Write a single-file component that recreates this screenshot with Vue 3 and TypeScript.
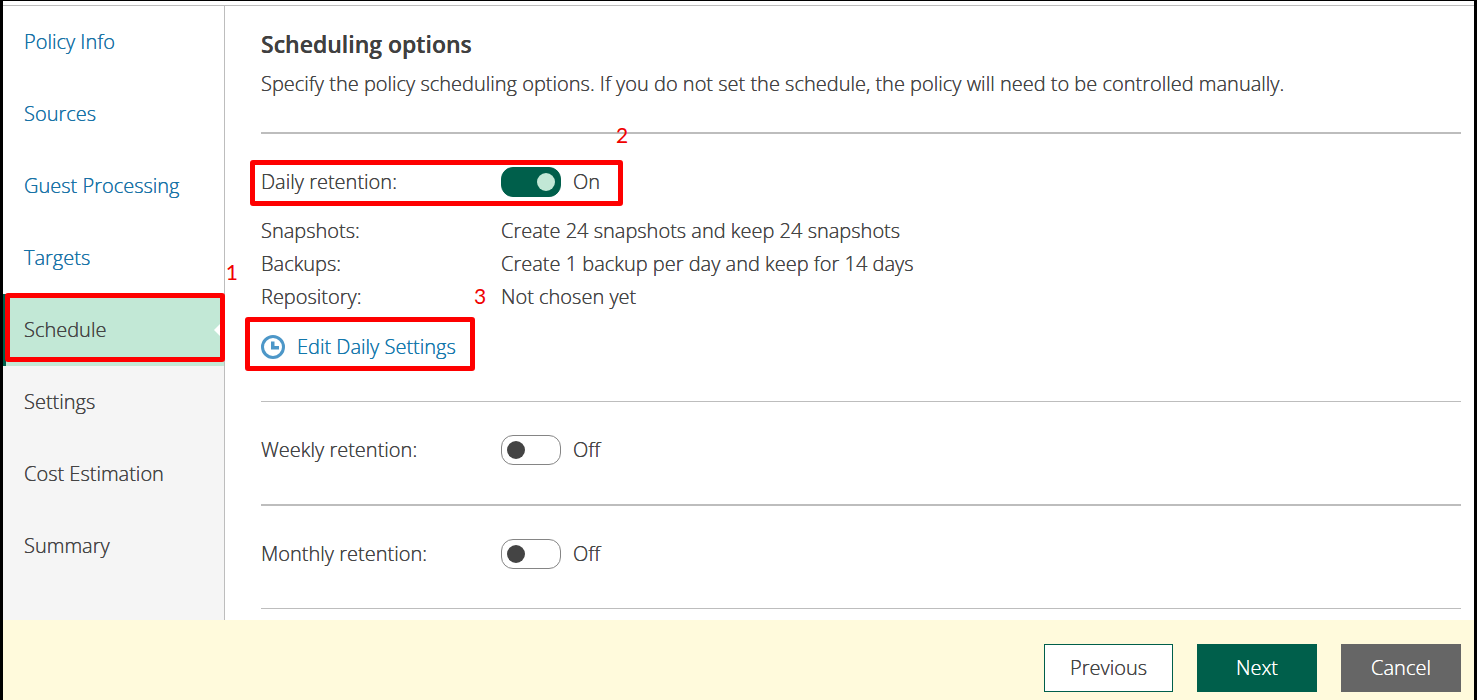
<script setup lang="ts">
import { ref } from 'vue'

interface Step {
  label: string
  state: 'done' | 'current' | 'pending'
}

interface Retention {
  id: string
  label: string
  rule: 'thin' | 'thick'
  on: boolean
  details: { term: string; text: string; note?: string }[]
}

const steps: Step[] = [
  { label: 'Policy Info', state: 'done' },
  { label: 'Sources', state: 'done' },
  { label: 'Guest Processing', state: 'done' },
  { label: 'Targets', state: 'done' },
  { label: 'Schedule', state: 'current' },
  { label: 'Settings', state: 'pending' },
  { label: 'Cost Estimation', state: 'pending' },
  { label: 'Summary', state: 'pending' },
]

const retentions = ref<Retention[]>([
  {
    id: 'daily',
    label: 'Daily retention:',
    rule: 'thick',
    on: true,
    details: [
      { term: 'Snapshots:', text: 'Create 24 snapshots and keep 24 snapshots' },
      { term: 'Backups:', text: 'Create 1 backup per day and keep for 14 days' },
      { term: 'Repository:', text: 'Not chosen yet', note: '3' },
    ],
  },
  { id: 'weekly', label: 'Weekly retention:', rule: 'thin', on: false, details: [] },
  { id: 'monthly', label: 'Monthly retention:', rule: 'thick', on: false, details: [] },
])
</script>

<template>
  <div class="frame">
    <div class="body">
      <nav class="steps" aria-label="Policy steps">
        <a
          v-for="step in steps"
          :key="step.label"
          href="#"
          class="step"
          :class="step.state"
          :aria-current="step.state === 'current' ? 'step' : undefined"
        >
          {{ step.label }}
          <template v-if="step.state === 'current'">
            <span class="notch"></span>
            <span class="mark mark-step"></span>
            <span class="number number-one">1</span>
          </template>
        </a>
      </nav>

      <main class="content">
        <h1>Scheduling options</h1>
        <p class="intro">
          Specify the policy scheduling options. If you do not set the schedule, the policy will need to be controlled
          manually.
        </p>

        <section v-for="item in retentions" :key="item.id" class="retention" :class="item.rule">
          <div class="row">
            <label class="name" :for="item.id">{{ item.label }}</label>
            <span class="switch">
              <input :id="item.id" v-model="item.on" type="checkbox" role="switch" class="toggle" />
              <span>{{ item.on ? 'On' : 'Off' }}</span>
            </span>
            <template v-if="item.id === 'daily'">
              <span class="mark mark-row"></span>
              <span class="number number-two">2</span>
            </template>
          </div>

          <template v-if="item.details.length">
            <dl class="details">
              <div v-for="detail in item.details" :key="detail.term" class="detail">
                <dt>{{ detail.term }}</dt>
                <dd>
                  <span v-if="detail.note" class="number number-three">{{ detail.note }}</span>
                  {{ detail.text }}
                </dd>
              </div>
            </dl>
            <a href="#" class="edit">
              <svg width="24" height="24" viewBox="0 0 24 24" aria-hidden="true">
                <circle cx="12" cy="12" r="10.5" fill="none" stroke="#4d97c8" stroke-width="3" />
                <path d="M10 6.5h3.5V11H18v3.5h-8z" fill="#4d97c8" />
              </svg>
              Edit Daily Settings
              <span class="mark mark-edit"></span>
            </a>
          </template>
        </section>
      </main>
    </div>

    <footer class="actions">
      <button type="button" class="previous">Previous</button>
      <button type="button" class="next">Next</button>
      <button type="button" class="cancel">Cancel</button>
    </footer>
  </div>
</template>

<style>
body {
  margin: 0;
}
</style>

<style scoped>
* {
  box-sizing: border-box;
}

.frame {
  display: flex;
  flex-direction: column;
  min-height: 100vh;
  padding-top: 4px;
  border: solid #000;
  border-width: 1px 3px 0;
  background: #fff;
  color: #444;
  font: 300 20px/30px 'Open Sans', 'Noto Sans', sans-serif;
  text-shadow: 0 0 0 currentColor;
}

.body {
  display: flex;
  flex: 1;
  border-top: 1px solid #bdbdbd;
}

.steps {
  flex: none;
  width: 222px;
  border-right: 1px solid #bdbdbd;
  background: #f5f5f5;
}

.step {
  position: relative;
  display: flex;
  align-items: center;
  height: 72px;
  padding-left: 21px;
  color: #444;
  text-decoration: none;
}

.step.done {
  background: #fff;
  color: #1672a6;
}

.step.current {
  padding-left: 18px;
  border-left: 3px solid #005f4b;
  background: #c2e8d6;
}

.notch {
  position: absolute;
  top: 26px;
  right: 0;
  border: solid transparent;
  border-width: 10px 10px 10px 0;
  border-right-color: #fff;
}

.mark {
  position: absolute;
  border: 5px solid #fe0000;
  border-radius: 3px;
  pointer-events: none;
}

.mark-step {
  inset: -1px -1px 4px -1px;
}

.mark-row {
  top: -7px;
  left: -11px;
  width: 373px;
  height: 46px;
}

.mark-edit {
  inset: -15px -19px -9px -16px;
}

.number {
  position: absolute;
  color: #f00000;
  font-family: Lato, sans-serif;
  font-size: 21px;
  font-weight: 400;
  line-height: 24px;
  text-shadow: none;
}

.number-one {
  top: -34px;
  right: -14px;
}

.number-two {
  top: -44px;
  left: 355px;
}

.number-three {
  top: 4px;
  left: -27px;
}

.content {
  flex: 1;
  padding: 23px 13px 11px 36px;
}

h1 {
  margin: 0;
  color: #404040;
  font-size: 23px;
  font-weight: 600;
  line-height: 30px;
}

.intro {
  margin: 10px 0 33px;
}

.retention {
  padding: 33px 0 39px;
  border-top: 1px solid #bdbdbd;
}

.retention.thick {
  border-top-width: 2px;
}

.retention:last-child {
  border-bottom: 1px solid #bdbdbd;
}

.row {
  position: relative;
  display: flex;
  align-items: center;
}

.name,
dt {
  flex: none;
  width: 240px;
}

.switch {
  display: flex;
  align-items: center;
  gap: 12px;
}

.toggle {
  appearance: none;
  display: flex;
  align-items: center;
  width: 60px;
  height: 30px;
  margin: 0;
  padding: 0 5px;
  border: 1px solid #858585;
  border-radius: 12px;
  background: #fff;
  cursor: pointer;
}

.toggle::before {
  content: '';
  width: 18px;
  height: 18px;
  border-radius: 50%;
  background: #444;
}

.toggle:checked {
  justify-content: flex-end;
  border-color: #005f4b;
  background: #005f4b;
}

.toggle:checked::before {
  background: #c2e8d6;
}

.details {
  margin: 17px 0 19px;
}

.detail {
  display: flex;
  line-height: 33px;
}

dd {
  position: relative;
  margin: 0;
}

.edit {
  position: relative;
  display: flex;
  align-items: center;
  gap: 12px;
  width: fit-content;
  color: #1277ac;
  text-decoration: none;
}

.step,
.edit,
button {
  text-shadow: 0 0 0 currentColor;
}

.actions {
  display: flex;
  justify-content: flex-end;
  gap: 24px;
  padding: 24px 13px 8px;
  background: #fffadc;
}

button {
  min-width: 120px;
  height: 48px;
  padding: 0 25px;
  border: 1px solid;
  border-radius: 0;
  font: inherit;
  cursor: pointer;
}

.previous {
  border-color: #005f4b;
  background: #fff;
  color: #444;
}

.next {
  border-color: #005f4b;
  background: #005f4b;
  color: #fff;
}

.cancel {
  border-color: #666;
  background: #666;
  color: #fff;
}
</style>
